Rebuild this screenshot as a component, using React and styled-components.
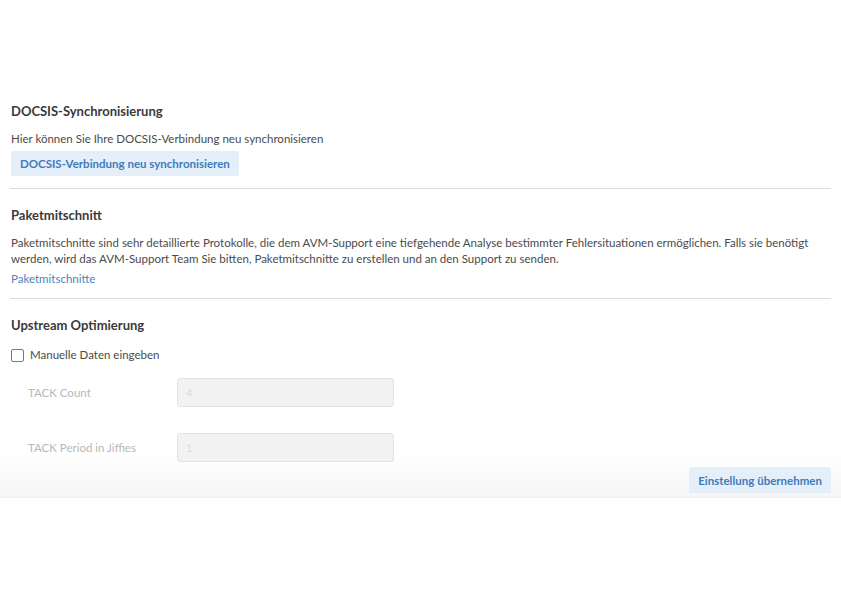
import React from "react";
import styled, { createGlobalStyle } from "styled-components";

const Global = createGlobalStyle`
  html, body { margin: 0; padding: 0; background: #fff; }
  body { font-family: "Lato", "Noto Sans", sans-serif; color: #444; -webkit-font-smoothing: antialiased; }
  * { box-sizing: border-box; }
`;

const Page = styled.div`
  width: 841px;
  height: 595px;
  background: #fff;
`;

const Panel = styled.div`
  padding: 102px 10px 4px 10px;
  background: linear-gradient(to bottom, #fff 0, #fff 455px, #f6f6f6 100%);
  border-bottom: 1px solid #f0f0f0;
`;

const Section = styled.section`
  padding: 0 0 ${(p) => (p.$last ? "0" : "11px")} 0;
  border-bottom: ${(p) => (p.$last ? "none" : "1px solid #dcdcdc")};
  margin-bottom: ${(p) => (p.$last ? "0" : "17px")};
`;

const Heading = styled.h2`
  margin: 0 0 11px 1px;
  font-size: 13px;
  font-weight: 700;
  color: #3a3a3a;
  line-height: 18px;
`;

const Text = styled.p`
  margin: 0 0 4px 1px;
  font-size: 11.5px;
  line-height: 16px;
  color: #4a4a4a;
`;

const SoftButton = styled.button`
  display: block;
  font-family: inherit;
  font-size: 11.5px;
  font-weight: 700;
  color: #3e7bbd;
  background: #e5eff9;
  border: none;
  border-radius: 2px;
  height: ${(p) => (p.$primary ? "26px" : "25px")};
  padding: 0 9px;
  margin: 0 0 ${(p) => (p.$primary ? "0" : "1px")} 1px;
  cursor: pointer;
`;

const Link = styled.a`
  display: block;
  width: fit-content;
  margin: 4px 0 0 1px;
  font-size: 11.5px;
  line-height: 16px;
  color: #4a84c0;
  text-decoration: none;
`;

const CheckRow = styled.label`
  display: flex;
  align-items: center;
  gap: 6px;
  padding-top: 2px;
  margin: 0 0 15px 1px;
  font-size: 11.5px;
  line-height: 16px;
  color: #4a4a4a;
`;

const Box = styled.span`
  width: 13px;
  height: 13px;
  border: 1px solid #7a7a7a;
  border-radius: 2px;
  background: #fff;
`;

const FieldRow = styled.div`
  display: grid;
  grid-template-columns: 149px 217px;
  align-items: center;
  padding-left: 18px;
  margin-bottom: 26px;
`;

const FieldLabel = styled.span`
  font-size: 11.5px;
  color: #b8b8b8;
`;

const Input = styled.input`
  font-family: inherit;
  height: 29px;
  width: 217px;
  border: 1px solid #e3e3e3;
  border-radius: 3px;
  background: #f2f2f2;
  color: #dcdcdc;
  font-size: 11.5px;
  padding: 0 8px;
`;

const Actions = styled.div`
  display: flex;
  justify-content: flex-end;
  margin-top: -21px;
`;

export default function App() {
  return (
    <Page>
      <Global />
      <Panel>
        <Section>
          <Heading>DOCSIS-Synchronisierung</Heading>
          <Text>Hier können Sie Ihre DOCSIS-Verbindung neu synchronisieren</Text>
          <SoftButton>DOCSIS-Verbindung neu synchronisieren</SoftButton>
        </Section>
        <Section>
          <Heading>Paketmitschnitt</Heading>
          <Text>
            Paketmitschnitte sind sehr detaillierte Protokolle, die dem AVM-Support eine tiefgehende Analyse bestimmter
            Fehlersituationen ermöglichen. Falls sie benötigt werden, wird das AVM-Support Team Sie bitten,
            Paketmitschnitte zu erstellen und an den Support zu senden.
          </Text>
          <Link href="#">Paketmitschnitte</Link>
        </Section>
        <Section $last>
          <Heading>Upstream Optimierung</Heading>
          <CheckRow>
            <Box />
            Manuelle Daten eingeben
          </CheckRow>
          <FieldRow>
            <FieldLabel>TACK Count</FieldLabel>
            <Input disabled defaultValue="4" />
          </FieldRow>
          <FieldRow>
            <FieldLabel>TACK Period in Jiffies</FieldLabel>
            <Input disabled defaultValue="1" />
          </FieldRow>
          <Actions>
            <SoftButton $primary>Einstellung übernehmen</SoftButton>
          </Actions>
        </Section>
      </Panel>
    </Page>
  );
}
